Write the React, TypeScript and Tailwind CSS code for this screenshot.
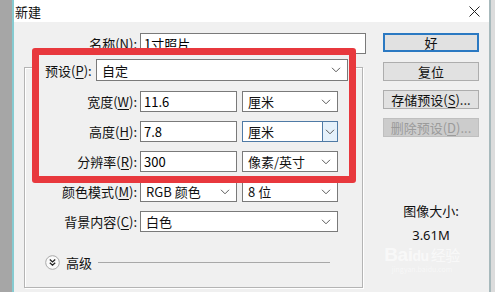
import React from "react";

const Chevron = () => (
  <svg width="10" height="6" viewBox="0 0 10 6" className="shrink-0">
    <path d="M1 0.8l4 4 4-4" fill="none" stroke="#5b5b5b" strokeWidth="1" />
  </svg>
);

const Input = ({ value, className }: { value: string; className: string }) => (
  <div
    className={`h-full bg-white border border-[#7a7a7a] pl-[3px] flex items-center text-[13px] leading-none text-black ${className}`}
  >
    {value}
  </div>
);

const Select = ({
  value,
  className,
  focus,
}: {
  value: string;
  className: string;
  focus?: boolean;
}) =>
  focus ? (
    <div
      className={`h-full bg-white border border-[#4f7aa5] flex items-stretch text-[13px] leading-none ${className}`}
    >
      <span className="flex-1 pl-[5px] flex items-center">{value}</span>
      <span className="w-[15px] border-l border-[#4f7aa5] bg-[#e5f1fb] flex items-center justify-center">
        <Chevron />
      </span>
    </div>
  ) : (
    <div
      className={`h-full bg-white border border-[#7a7a7a] pl-[5px] pr-[6px] flex items-center justify-between text-[13px] leading-none ${className}`}
    >
      <span>{value}</span>
      <Chevron />
    </div>
  );

const Label = ({ text, k, className }: { text: string; k: string; className: string }) => (
  <span className={`text-right text-[13px] leading-none whitespace-nowrap ${className}`}>
    {text}(<u className="underline-offset-2">{k}</u>):
  </span>
);

export default function App() {
  return (
    <div className="relative w-[495px] h-[292px] overflow-hidden flex font-['Noto_Sans_CJK_SC','Noto_Sans',sans-serif] text-[#111]">
      {/* desktop edge */}
      <div className="w-[12px] bg-[#a6a6a6]" />
      <div className="w-[2px] bg-[#86cbd1]" />

      {/* dialog */}
      <div className="w-[475px] flex flex-col">
        <div className="h-[22px] bg-white flex items-center justify-between pl-[1px] pr-[9px]">
          <span className="text-[13px] leading-none">新建</span>
          <svg width="11" height="11" viewBox="0 0 11 11">
            <path d="M0.5 0.5l10 10M10.5 0.5l-10 10" stroke="#222" strokeWidth="1" />
          </svg>
        </div>

        <div className="flex-1 bg-[#f0f0f0] flex pl-[10px]">
          {/* left column */}
          <div className="w-[342px] flex flex-col">
            <div className="mt-[11px] h-[21px] flex items-center">
              <Label text="名称" k="N" className="w-[113px]" />
              <Input value="1寸照片" className="ml-[3px] w-[226px]" />
            </div>

            {/* group box */}
            <div className="mt-[13px] w-[339px] h-[221px] border border-[#b4b4b4] shadow-[inset_1px_1px_0_#fff,1px_1px_0_#fff] flex flex-col">
              <div className="-mt-[9px] ml-[13px] w-[312px] h-[22px] bg-[#f0f0f0] pl-[7px] flex items-center">
                <span className="w-[51px] text-[13px] leading-none whitespace-nowrap">
                  预设(<u className="underline-offset-2">P</u>):
                </span>
                <Select value="自定" className="w-[252px]" />
              </div>

              <div className="mt-[10px] h-[21px] flex items-center">
                <Label text="宽度" k="W" className="w-[112px]" />
                <Input value="11.6" className="ml-[3px] w-[97px]" />
                <Select value="厘米" className="ml-[5px] w-[96px]" />
              </div>
              <div className="mt-[9px] h-[21px] flex items-center">
                <Label text="高度" k="H" className="w-[112px]" />
                <Input value="7.8" className="ml-[3px] w-[97px]" />
                <Select value="厘米" focus className="ml-[5px] w-[96px]" />
              </div>
              <div className="mt-[9px] h-[21px] flex items-center">
                <Label text="分辨率" k="R" className="w-[112px]" />
                <Input value="300" className="ml-[3px] w-[97px]" />
                <Select value="像素/英寸" className="ml-[5px] w-[96px]" />
              </div>
              <div className="mt-[9px] h-[21px] flex items-center">
                <Label text="颜色模式" k="M" className="w-[112px]" />
                <Select value="RGB 颜色" className="ml-[3px] w-[97px]" />
                <Select value="8 位" className="ml-[5px] w-[96px]" />
              </div>
              <div className="mt-[9px] h-[21px] flex items-center">
                <Label text="背景内容" k="C" className="w-[112px]" />
                <Select value="白色" className="ml-[3px] w-[198px]" />
              </div>

              <div className="mt-[23px] h-[15px] pl-[20px] flex items-center">
                <svg width="15" height="15" viewBox="0 0 15 15" className="shrink-0">
                  <circle cx="7.5" cy="7.5" r="6.8" fill="#fafafa" stroke="#a9a9a9" strokeWidth="1" />
                  <path d="M4.8 4.6l2.7 2.4 2.7-2.4M4.8 7.8l2.7 2.4 2.7-2.4" fill="none" stroke="#222" strokeWidth="1.3" />
                </svg>
                <span className="ml-[6px] text-[13px] leading-none">高级</span>
                <div className="ml-[6px] w-[232px] h-[2px] border-t border-[#a8a8a8] border-b-white" />
              </div>
            </div>
          </div>

          {/* right column */}
          <div className="ml-[17px] w-[96px] flex flex-col items-center">
            <div className="mt-[11px] w-full h-[19px] bg-[#e1e1e1] border-2 border-[#2b79c2] flex items-center justify-center text-[13px] leading-none">
              好
            </div>
            <div className="mt-[10px] w-full h-[19px] bg-[#e1e1e1] border border-[#adadad] flex items-center justify-center text-[13px] leading-none">
              复位
            </div>
            <div className="mt-[9px] w-full h-[19px] bg-[#e1e1e1] border border-[#adadad] flex items-center justify-center text-[13px] leading-none whitespace-nowrap">
              存储预设(<u className="underline-offset-2">S</u>)...
            </div>
            <div className="mt-[9px] w-full h-[19px] bg-[#cccccc] border border-[#bfbfbf] flex items-center justify-center text-[13px] leading-none whitespace-nowrap text-[#9b9b9b]">
              删除预设(<u className="underline-offset-2">D</u>)...
            </div>

            <div className="mt-[66px] text-[13px] leading-[16px]">图像大小:</div>
            <div className="mt-[8px] text-[13px] leading-[16px] font-['Noto_Sans',sans-serif]">3.61M</div>

            {/* watermark */}
            <div className="-ml-[18px] mt-[2px] flex flex-col items-center text-white/60 leading-none">
              <span className="text-[19px] font-bold tracking-tight font-['Liberation_Sans',sans-serif]">
                Bai<span className="text-[14px]">du</span>
                <span className="ml-[2px] text-[15px] font-['Noto_Sans_CJK_SC',sans-serif] font-normal">经验</span>
              </span>
              <span className="text-[7px] mt-[2px] text-white/50">jingyan.baidu.com</span>
            </div>
          </div>
        </div>
      </div>

      <div className="w-[2px] bg-[#a7b9bc]" />
      <div className="w-[4px] bg-[#dcdcdc]" />

      {/* red annotation frame */}
      <div className="absolute left-[32px] top-[48px] w-[324px] h-[135px] border-[7px] border-[#e8383d] rounded-[3px] pointer-events-none" />
    </div>
  );
}
